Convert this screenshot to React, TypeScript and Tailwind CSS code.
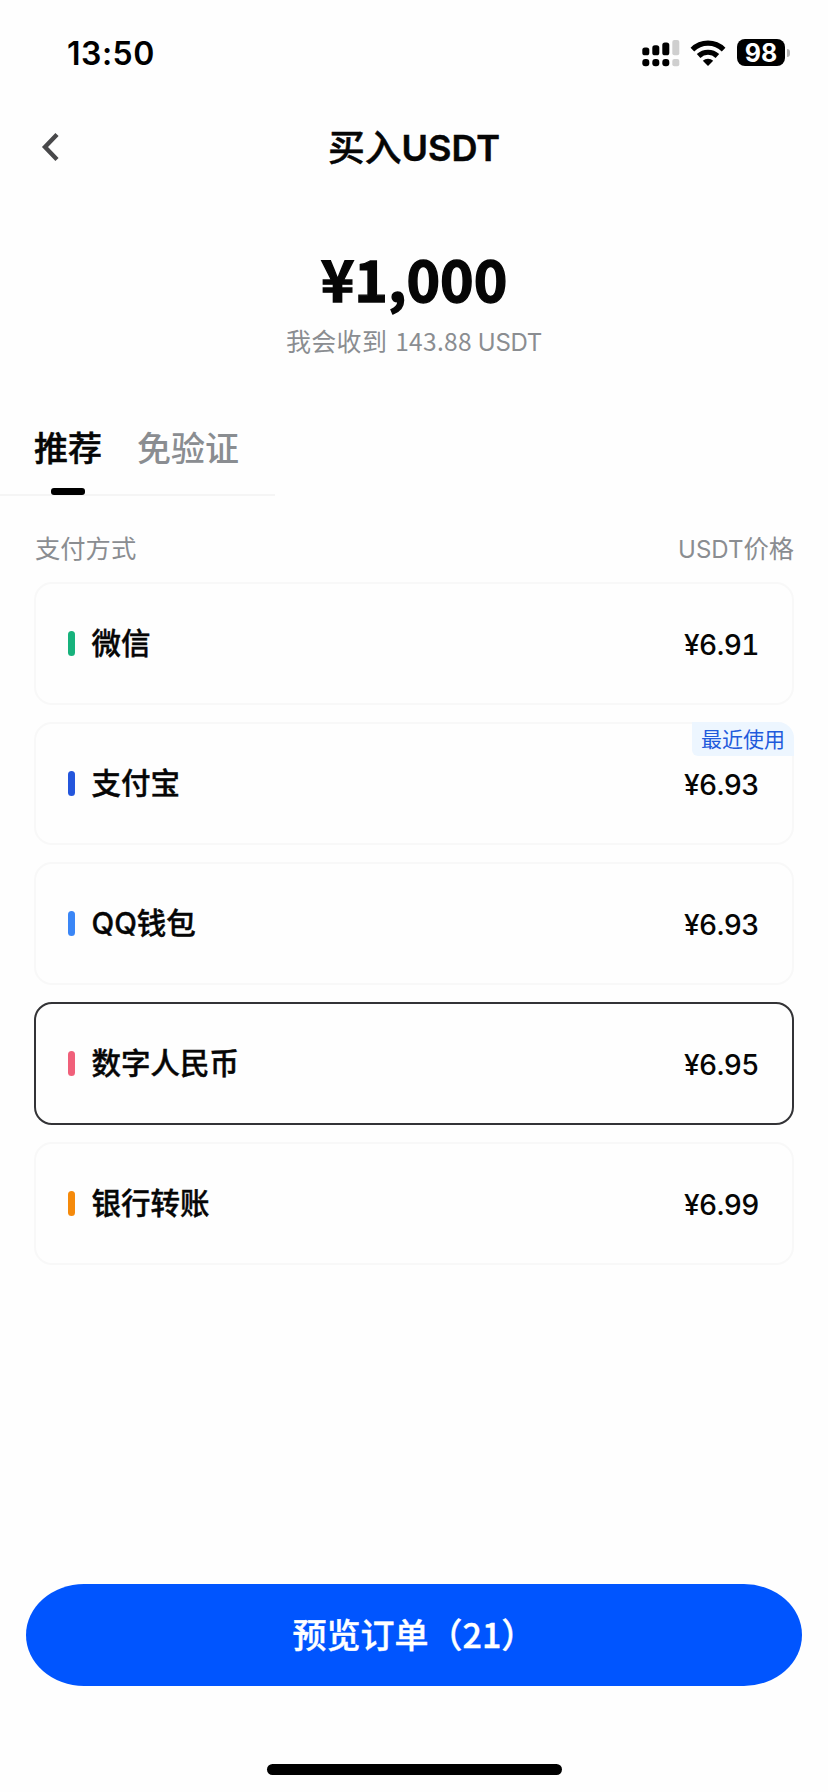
import clsx from 'clsx';

interface Method {
    id: string;
    name: string;
    price: string;
    bar: string;
    recent?: boolean;
}

const METHODS: Method[] = [
    { id: 'wechat', name: '微信', price: '6.91', bar: 'bg-[#17b27c]' },
    { id: 'alipay', name: '支付宝', price: '6.93', bar: 'bg-[#2456dc]', recent: true },
    { id: 'qq', name: 'QQ钱包', price: '6.93', bar: 'bg-[#3a86f6]' },
    { id: 'ecny', name: '数字人民币', price: '6.95', bar: 'bg-[#f0607a]' },
    { id: 'bank', name: '银行转账', price: '6.99', bar: 'bg-[#f58a0b]' },
];

function StatusBar() {
    return (
        <div className="flex h-[105px] items-center justify-between pl-[67px] pr-[38px]">
            <span className="pt-[3px] text-[32px] font-semibold leading-none tracking-[0.5px] text-black">13:50</span>
            <div className="flex items-center">
                <svg className="h-[28px] w-[38px]" viewBox="0 0 38 28">
                    <rect x="0.3" y="8.5" width="7" height="7.8" rx="2.6" />
                    <rect x="10.3" y="6.3" width="7" height="10" rx="2.6" />
                    <rect x="20.3" y="3.5" width="7" height="12.8" rx="2.6" />
                    <rect x="30.3" y="1" width="7" height="15.3" rx="2" fill="#cfcfcf" />
                    <rect x="0.3" y="20" width="7" height="7.2" rx="3" />
                    <rect x="10.3" y="20" width="7" height="7.2" rx="3" />
                    <rect x="20.3" y="20" width="7" height="7.2" rx="3" />
                    <rect x="30.3" y="20" width="7" height="7.2" rx="2" fill="#cfcfcf" />
                </svg>
                <svg className="ml-[10px] h-[26px] w-[36px]" viewBox="0 0 36 26" fill="none" stroke="#000" strokeWidth="5.2">
                    <path d="M2.4 9.6a22.2 22.2 0 0 1 31.2 0" />
                    <path d="M8.6 16a13.6 13.6 0 0 1 18.8 0" />
                    <path d="M18 26l-5.2-5.2a7.4 7.4 0 0 1 10.4 0z" fill="#000" stroke="none" />
                </svg>
                <span className="ml-[11px] flex h-[27px] w-[48px] items-center justify-center rounded-[8px] bg-black pt-px text-[25px] font-bold leading-none text-white">98</span>
                <span className="ml-[2px] h-[8px] w-[3px] rounded-r-full bg-[#b5b5b5]" />
            </div>
        </div>
    );
}

function MethodCard({ method, selected }: { method: Method; selected: boolean }) {
    return (
        <button
            type="button"
            className={clsx(
                'relative flex h-[123px] w-full items-center rounded-[18px] border-2 pl-[32px] pr-[33px]',
                selected ? 'border-[#333336]' : 'border-[#f8f8f8]',
            )}
        >
            <span className={clsx('h-[25px] w-[6.5px] rounded-full', method.bar)} />
            <span className="ml-[17px] pt-px text-[29.5px] font-medium leading-none [-webkit-text-stroke:0.4px_#060606]">{method.name}</span>
            <span className="ml-auto pt-[2px] text-[28px] font-medium leading-none tracking-[-0.5px] tabular-nums">¥{method.price}</span>
            {method.recent && (
                <span className="absolute -right-[2px] -top-[2px] flex h-[34px] w-[102px] items-center justify-center rounded-bl-[6px] rounded-tr-[16px] bg-[#edf6ff] text-[21px] leading-none text-[#1f5bdc]">
                    最近使用
                </span>
            )}
        </button>
    );
}

export default function App() {
    return (
        <div className="flex h-[1792px] w-[828px] flex-col bg-[#fefefe] font-['Inter','Noto_Sans_CJK_SC',sans-serif] text-[#060606]">
            <StatusBar />

            <header className="grid h-[84px] grid-cols-[80px_1fr_80px] items-center">
                <button type="button" className="pl-[41px]">
                    <svg className="h-[30px] w-[18px]" viewBox="0 0 18 30" fill="none" stroke="#48484a" strokeWidth="4.4">
                        <path d="M16 2.5L4 15L16 27.5" />
                    </svg>
                </button>
                <h1 className="pt-[2px] text-center text-[36.8px] font-medium leading-none [-webkit-text-stroke:0.5px_#060606]">
                    买入<span className="text-[36px] font-semibold">USDT</span>
                </h1>
            </header>

            <section className="flex flex-col items-center pt-[57px]">
                <p className="font-['Noto_Sans_CJK_SC',sans-serif] text-[57px] font-bold leading-[62px] [-webkit-text-stroke:1.4px_#060606]">¥1,000</p>
                <p className="mt-[17px] text-[25px] leading-[32px] tracking-[0.3px] text-[#8a8d91]">
                    我会收到<span className="ml-[8px] font-['Noto_Sans_CJK_SC',sans-serif] text-[24.5px]">143.88</span>
                    <span className="ml-[6px] text-[24px] tracking-[-0.3px]">USDT</span>
                </p>
            </section>

            <nav className="mt-[62px] flex h-[75px] w-[275px] border-b-2 border-[#f5f5f5] pl-[34px]">
                <div className="flex flex-col items-center">
                    <span className="pt-[3px] text-[34px] font-medium leading-[50px] [-webkit-text-stroke:0.5px_#060606]">推荐</span>
                    <span className="mt-[14px] h-[7px] w-[34px] shrink-0 rounded-[3px] bg-black" />
                </div>
                <span className="ml-[35px] pt-[3px] text-[34px] font-medium leading-[50px] text-[#8a8d91]">免验证</span>
            </nav>

            <main className="px-[34px]">
                <div className="flex h-[86px] items-center justify-between pl-px pt-[19px] text-[25.3px] text-[#8a8d91]">
                    <span>支付方式</span>
                    <span>
                        <span className="text-[24px]">USDT</span>价格
                    </span>
                </div>
                <div className="flex flex-col gap-[17px]">
                    {METHODS.map((m) => (
                        <MethodCard key={m.id} method={m} selected={m.id === 'ecny'} />
                    ))}
                </div>
            </main>

            <footer className="mt-auto flex flex-col items-center px-[26px] pb-[17px]">
                <button
                    type="button"
                    className="h-[102px] w-full rounded-[58px/51px] bg-[#0055ff] pb-[3px] font-['Noto_Sans_CJK_SC',sans-serif] text-[34px] font-medium leading-none text-white [-webkit-text-stroke:0.4px_#fff]"
                >
                    预览订单（21）
                </button>
                <div className="mt-[78px] h-[11px] w-[295px] rounded-full bg-black" />
            </footer>
        </div>
    );
}
